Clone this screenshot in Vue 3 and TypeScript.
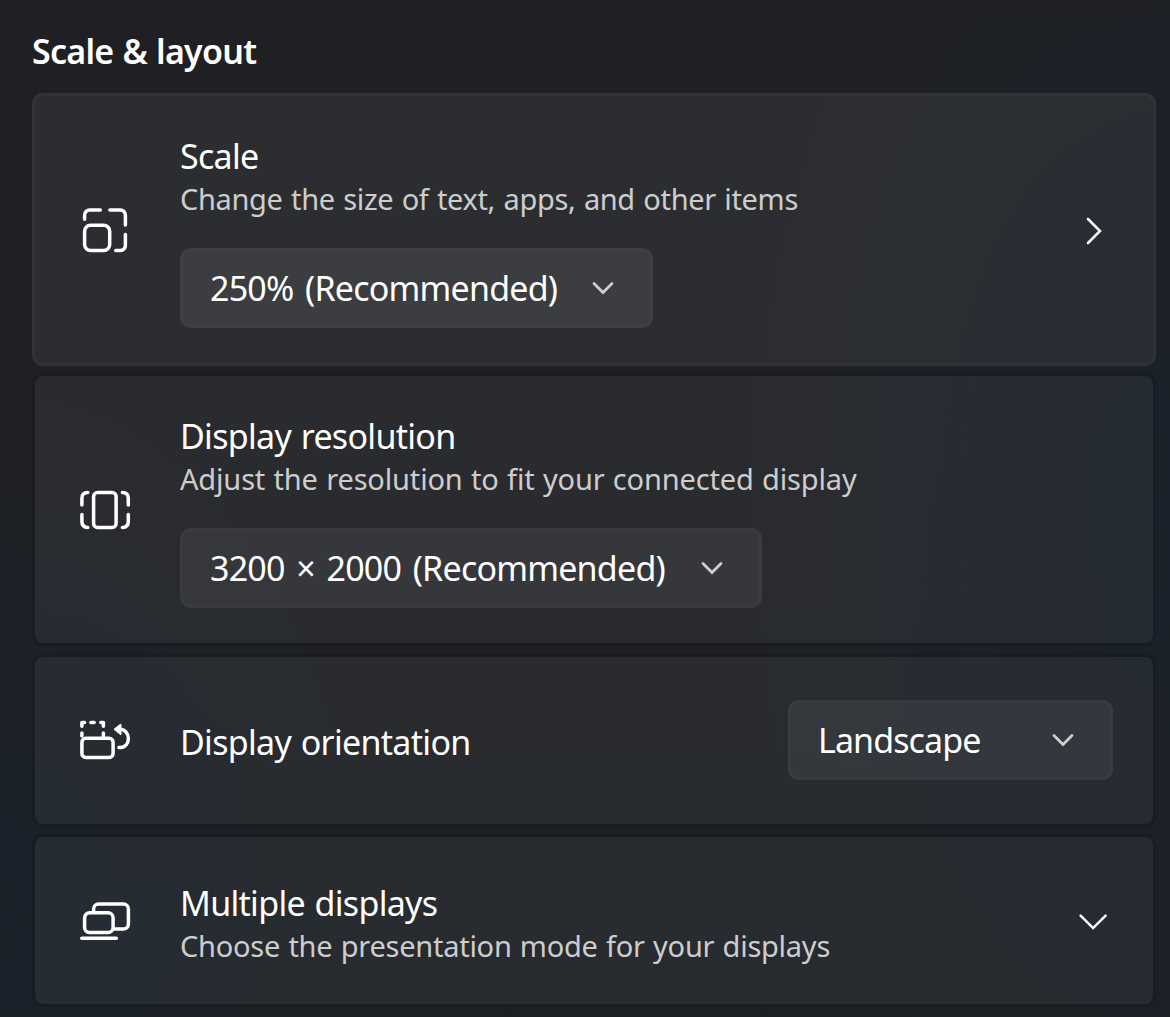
<template>
  <main class="settings">
    <h1 class="settings__heading">Scale &amp; layout</h1>

    <section
      v-for="row in rows"
      :key="row.id"
      class="card"
      :class="[`card--${row.id}`, { 'card--hover': hovered === row.id }]"
    >
      <svg class="card__icon" viewBox="0 0 60 60">
        <path v-for="d in row.icon" :key="d" :d="d" />
        <path v-if="row.iconFill" class="card__icon-fill" :d="row.iconFill" />
      </svg>

      <div class="card__body">
        <h2 class="card__title">{{ row.title }}</h2>
        <p v-if="row.text" class="card__text">{{ row.text }}</p>
        <button v-if="row.value && !row.inline" class="select">
          <span class="select__value">{{ row.value }}</span>
          <svg class="select__chevron" viewBox="0 0 24 24"><path d="M3 7.5l9 9 9-9" /></svg>
        </button>
      </div>

      <button v-if="row.value && row.inline" class="select">
        <span class="select__value">{{ row.value }}</span>
        <svg class="select__chevron" viewBox="0 0 24 24"><path d="M3 7.5l9 9 9-9" /></svg>
      </button>
      <svg v-if="row.chevron" class="card__chevron" viewBox="0 0 40 40">
        <path :d="row.chevron" />
      </svg>
    </section>
  </main>
</template>

<script lang="ts" setup>
import { ref } from "vue";

interface Row {
  id: string;
  title: string;
  text?: string;
  value?: string;
  inline?: boolean;
  chevron?: string;
  icon: string[];
  iconFill?: string;
}

const hovered = ref("scale");

const rows: Row[] = [
  {
    id: "scale",
    title: "Scale",
    text: "Change the size of text, apps, and other items",
    value: "250% (Recommended)",
    chevron: "M15 9L27 21 15 33",
    icon: [
      "M9.6 19.2V15a5 5 0 0 1 5-5h10.7",
      "M34.9 10h10.5a5 5 0 0 1 5 5v10",
      "M50.4 34.4v11a5 5 0 0 1-5 5h-4.7",
      "M15.6 25.3h13.1a6 6 0 0 1 6 6v13.1a6 6 0 0 1-6 6H15.6a6 6 0 0 1-6-6V31.3a6 6 0 0 1 6-6z",
    ],
  },
  {
    id: "resolution",
    title: "Display resolution",
    text: "Adjust the resolution to fit your connected display",
    value: "3200 × 2000 (Recommended)",
    icon: [
      "M12.8 12.6Q6.9 12.6 6.9 18.5V25",
      "M12.8 47.4Q6.9 47.4 6.9 41.5V34.6",
      "M47.4 12.6Q53.3 12.6 53.3 18.5V25",
      "M47.4 47.4Q53.3 47.4 53.3 41.5V34.6",
      "M22.6 12.6h14.5a4 4 0 0 1 4 4v26.8a4 4 0 0 1-4 4H22.6a4 4 0 0 1-4-4V16.6a4 4 0 0 1 4-4z",
    ],
  },
  {
    id: "orientation",
    title: "Display orientation",
    value: "Landscape",
    inline: true,
    icon: [
      "M10.9 28.3h23.2a4 4 0 0 1 4 4v11.1a4 4 0 0 1-4 4H10.9a4 4 0 0 1-4-4V32.3a4 4 0 0 1 4-4z",
      "M6.9 16.2V12.6h2.6",
      "M15.9 12.6h3.2",
      "M25.8 12.6h2.6v3.6",
      "M6.9 23v3",
      "M28.4 23v3",
      "M43.9 37.6C50 37.6 53.4 33.5 53.4 28.5 53.4 23.5 50 19.5 45 19.3",
    ],
    iconFill: "M39.8 19.3L45.6 14.8V24z",
  },
  {
    id: "multiple",
    title: "Multiple displays",
    text: "Choose the presentation mode for your displays",
    chevron: "M7.6 15.6L20.1 28.1 32.6 15.6",
    icon: [
      "M14.6 22.8h18.5a5 5 0 0 1 5 5v9.6a5 5 0 0 1-5 5H14.6a5 5 0 0 1-5-5V27.8a5 5 0 0 1 5-5z",
      "M18.6 21.5V18.9a5 5 0 0 1 5-5h24.8a5 5 0 0 1 5 5v15.1a5 5 0 0 1-5 5H39.5",
      "M6.8 48.2h34.5",
    ],
  },
];
</script>

<style>
body {
  background: #1d2126;
}
</style>

<style scoped>
.settings {
  box-sizing: border-box;
  display: flex;
  flex-direction: column;
  gap: 7px;
  min-height: 1017px;
  padding: 28px 14px 9px 32px;
  color: #fff;
  font-family: "Noto Sans", "Open Sans", sans-serif;
  background:
    radial-gradient(ellipse 420px 750px at 100% 50%, #1a212a 0%, rgba(26, 33, 42, 0) 100%),
    radial-gradient(ellipse 360px 520px at 0% 90%, #1a212a 0%, rgba(26, 33, 42, 0) 100%),
    linear-gradient(#202024 0%, #1f2024 60%, #1c2024 100%);
}

.settings__heading {
  margin: 0 0 11px;
  font-size: 34px;
  font-weight: 600;
  line-height: 47px;
  letter-spacing: -0.75px;
  word-spacing: 1px;
}

.card {
  box-sizing: border-box;
  display: flex;
  align-items: center;
  height: 173px;
  padding: 0 40px 1px;
  border: 3px solid rgba(0, 0, 0, 0.1);
  border-radius: 11px;
  background: rgba(255, 255, 255, 0.05);
  background-clip: padding-box;
}

.card--scale,
.card--resolution {
  height: 273px;
  padding-bottom: 0;
}

.card--resolution {
  margin-bottom: 1px;
}

.card--hover {
  border-color: rgba(255, 255, 255, 0.085);
  background-color: rgba(255, 255, 255, 0.06);
}

.card__icon {
  flex: none;
  width: 60px;
  height: 60px;
  margin-right: 45px;
  fill: none;
  stroke: #fff;
  stroke-width: 3.5;
  stroke-linecap: round;
  stroke-linejoin: round;
}

.card__icon-fill {
  fill: #fff;
  stroke-width: 1.8;
}

.card__body {
  flex: 1;
  padding-top: 3px;
}

.card--orientation .card__body {
  padding-top: 5px;
}

.card--multiple .card__body {
  padding-top: 7px;
}

.card__title {
  margin: 0;
  font-size: 34px;
  font-weight: 400;
  line-height: 45px;
  letter-spacing: -0.7px;
  word-spacing: 1.5px;
  white-space: nowrap;
}

.card__text {
  margin: 0;
  font-size: 29px;
  line-height: 40px;
  letter-spacing: -0.25px;
  word-spacing: 1px;
  color: #cdcdce;
  white-space: nowrap;
}

.card--scale .card__text {
  letter-spacing: -0.35px;
  word-spacing: 1.3px;
}

.card--resolution .card__text {
  letter-spacing: -0.16px;
}

.select {
  box-sizing: border-box;
  display: flex;
  align-items: center;
  justify-content: space-between;
  width: 325px;
  height: 80px;
  padding: 0 35px 0 27px;
  border: 3px solid rgba(255, 255, 255, 0.025);
  border-radius: 11px;
  background: rgba(255, 255, 255, 0.06);
  color: #fff;
  font: inherit;
  font-size: 34px;
  letter-spacing: -0.78px;
  word-spacing: 3.5px;
}

.card__body .select {
  margin-top: 29px;
}

.card--scale .select {
  width: 473px;
  border-color: rgba(255, 255, 255, 0.01);
  background: rgba(255, 255, 255, 0.077);
}

.card--resolution .select {
  width: 582px;
}

.card--orientation .select {
  letter-spacing: -0.9px;
}

.select__value {
  padding-bottom: 1px;
  white-space: nowrap;
}

.select__chevron {
  flex: none;
  width: 24px;
  height: 24px;
  fill: none;
  stroke: #cfcfd0;
  stroke-width: 2.7;
  stroke-linecap: round;
}

.card__chevron {
  flex: none;
  width: 40px;
  height: 40px;
  fill: none;
  stroke: #fff;
  stroke-width: 2.5;
  stroke-linecap: round;
}
</style>
